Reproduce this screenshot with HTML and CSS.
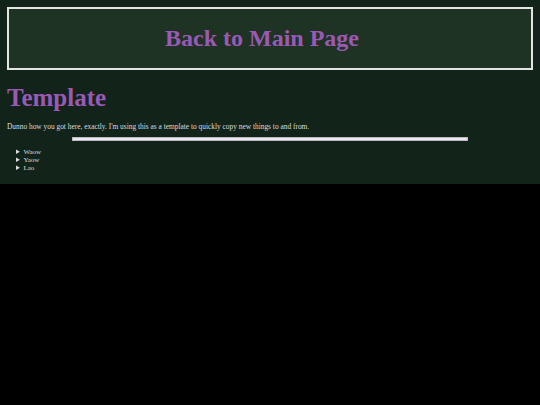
FILE: index.html
```html
<!DOCTYPE html>
<html lang="en">
<head>
    <meta charset="UTF-8">
    <meta name="viewport" content="width=device-width, initial-scale=1.0">
    <title>Template</title>
    <link rel="stylesheet" href="styles.css">
</head>
<body>
    <a class="back" href="#">Back to Main Page</a>

    <h1>Template</h1>
    <p class="intro">Dunno how you got here, exactly. I'm using this as a template to quickly copy new things to and from.</p>
    <hr class="divider">

    <div class="items">
        <details><summary>Waow</summary></details>
        <details><summary>Yaow</summary></details>
        <details><summary>Lao</summary></details>
    </div>
</body>
</html>
```

FILE: styles.css
```css
html {
    background-color: #000;
}

body {
    margin: 0;
    padding: 7px 7px 12px;
    background-color: #12231a;
    color: #dcdcdc;
    font-family: "Liberation Serif", serif;
}

.back {
    display: flex;
    align-items: center;
    justify-content: center;
    height: 59px;
    padding-right: 16px;
    border: 2px solid #e4e4e4;
    background-color: #1f3324;
    color: #9b59b6;
    font-size: 24px;
    font-weight: bold;
    text-decoration: none;
}

h1 {
    margin: 13px 0 0;
    color: #9b59b6;
    font-size: 25px;
    line-height: 29px;
}

.intro {
    margin: 10px 0 0;
    font-size: 7.4px;
    line-height: 9px;
}

.divider {
    width: 75%;
    height: 2px;
    margin: 6px auto 0;
    border: 1px solid #bbb;
    background-color: #efe4f5;
}

.items {
    margin-top: 7px;
    padding-left: 9px;
    font-size: 7px;
    line-height: 8px;
}
```
